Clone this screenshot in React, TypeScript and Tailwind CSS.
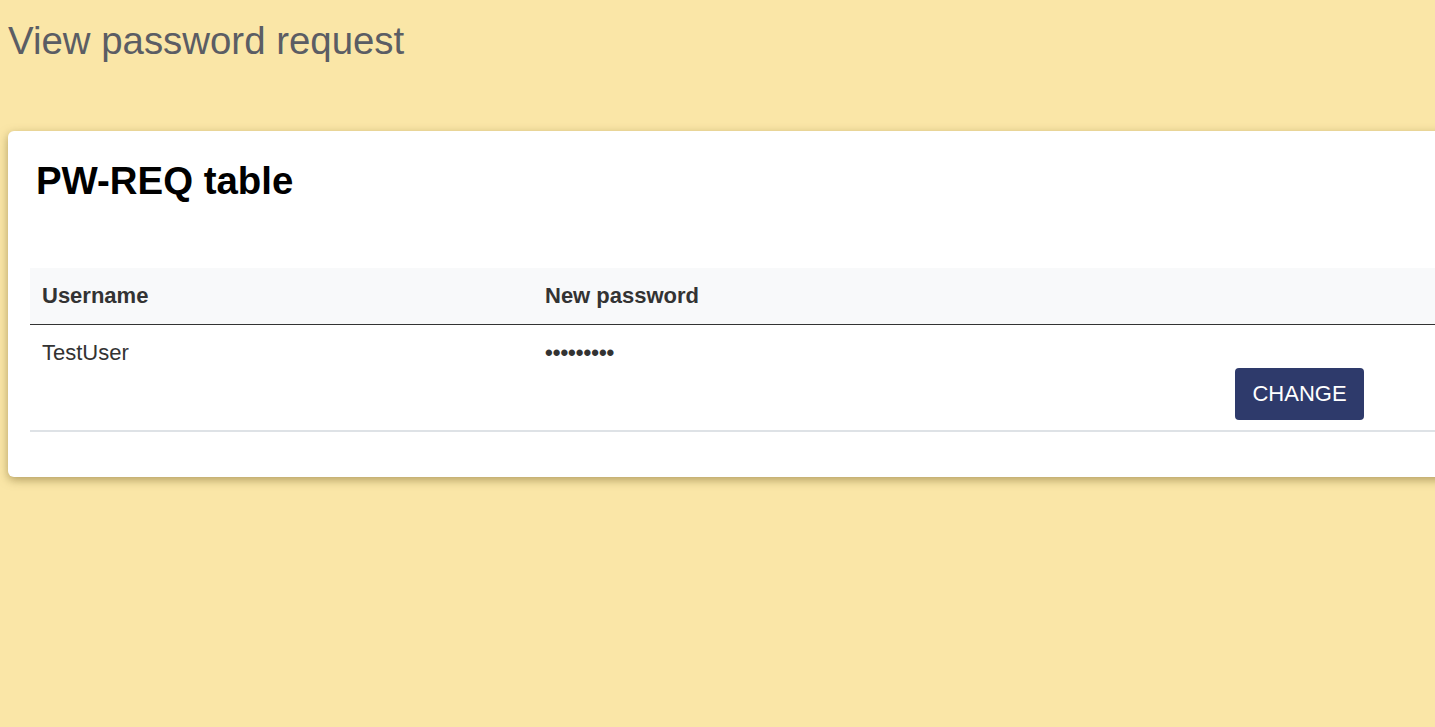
const App = () => {
  return (
    <div className="min-h-screen w-full overflow-hidden bg-[#fae6a7] font-['Liberation_Sans',Arial,sans-serif]">
      <h1 className="pl-2 pt-[17px] text-[38.4px] leading-[48px] text-[#5b5d64]">View password request</h1>

      <div className="ml-2 mt-[66px] w-[1520px] rounded-md bg-white pb-[45px] pl-[22px] pt-[28px] shadow-[0_3px_10px_rgba(120,100,40,0.55)]">
        <h2 className="pl-[6px] text-[38.4px] font-bold leading-[44px] text-black">PW-REQ table</h2>

        <table className="mt-[65px] w-[1498px] table-fixed border-collapse text-[22px] text-[#333]">
          <colgroup>
            <col className="w-[503px]" />
            <col className="w-[690px]" />
            <col />
          </colgroup>
          <thead>
            <tr className="h-[56px] border-b border-[#333] bg-[#f8f9fa]">
              <th className="px-3 text-left font-bold">Username</th>
              <th className="px-3 text-left font-bold">New password</th>
              <th className="px-3"></th>
            </tr>
          </thead>
          <tbody>
            <tr className="border-b-2 border-[#dee2e6] align-top">
              <td className="px-3 pt-[11px]">TestUser</td>
              <td className="px-3 pt-[11px] font-bold">•••••••••</td>
              <td className="px-3 pb-[10px] pt-[43px]">
                <button className="h-[52px] w-[129px] rounded-[4px] bg-[#2e3a6b] text-[22px] text-white">
                  CHANGE
                </button>
              </td>
            </tr>
          </tbody>
        </table>
      </div>
    </div>
  );
};

export default App;
